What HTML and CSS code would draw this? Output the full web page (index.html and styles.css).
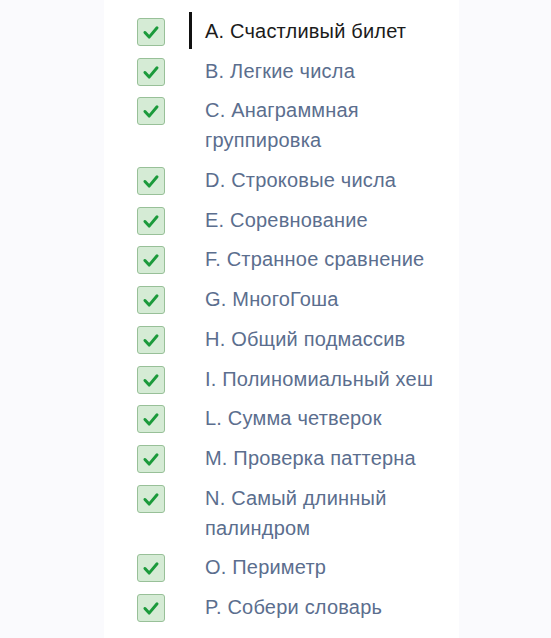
FILE: index.html
```html
<!DOCTYPE html>
<html lang="ru">
<head>
<meta charset="utf-8">
<link rel="stylesheet" href="styles.css">
</head>
<body>
<div class="page">
  <ul class="list">
    <li class="row current">
      <span class="box"><svg viewBox="0 0 28 28"><path d="M7.5 14.5l4.5 5 8.5-10"/></svg></span>
      <span class="label">A. Счастливый билет</span>
      <span class="caret"></span>
    </li>
    <li class="row"><span class="box"><svg viewBox="0 0 28 28"><path d="M7.5 14.5l4.5 5 8.5-10"/></svg></span><span class="label">B. Легкие числа</span></li>
    <li class="row"><span class="box"><svg viewBox="0 0 28 28"><path d="M7.5 14.5l4.5 5 8.5-10"/></svg></span><span class="label">C. Анаграммная группировка</span></li>
    <li class="row"><span class="box"><svg viewBox="0 0 28 28"><path d="M7.5 14.5l4.5 5 8.5-10"/></svg></span><span class="label">D. Строковые числа</span></li>
    <li class="row"><span class="box"><svg viewBox="0 0 28 28"><path d="M7.5 14.5l4.5 5 8.5-10"/></svg></span><span class="label">E. Соревнование</span></li>
    <li class="row"><span class="box"><svg viewBox="0 0 28 28"><path d="M7.5 14.5l4.5 5 8.5-10"/></svg></span><span class="label">F. Странное сравнение</span></li>
    <li class="row"><span class="box"><svg viewBox="0 0 28 28"><path d="M7.5 14.5l4.5 5 8.5-10"/></svg></span><span class="label">G. МногоГоша</span></li>
    <li class="row"><span class="box"><svg viewBox="0 0 28 28"><path d="M7.5 14.5l4.5 5 8.5-10"/></svg></span><span class="label">H. Общий подмассив</span></li>
    <li class="row"><span class="box"><svg viewBox="0 0 28 28"><path d="M7.5 14.5l4.5 5 8.5-10"/></svg></span><span class="label">I. Полиномиальный хеш</span></li>
    <li class="row"><span class="box"><svg viewBox="0 0 28 28"><path d="M7.5 14.5l4.5 5 8.5-10"/></svg></span><span class="label">L. Сумма четверок</span></li>
    <li class="row"><span class="box"><svg viewBox="0 0 28 28"><path d="M7.5 14.5l4.5 5 8.5-10"/></svg></span><span class="label">M. Проверка паттерна</span></li>
    <li class="row"><span class="box"><svg viewBox="0 0 28 28"><path d="M7.5 14.5l4.5 5 8.5-10"/></svg></span><span class="label">N. Самый длинный палиндром</span></li>
    <li class="row"><span class="box"><svg viewBox="0 0 28 28"><path d="M7.5 14.5l4.5 5 8.5-10"/></svg></span><span class="label">O. Периметр</span></li>
    <li class="row"><span class="box"><svg viewBox="0 0 28 28"><path d="M7.5 14.5l4.5 5 8.5-10"/></svg></span><span class="label">P. Собери словарь</span></li>
  </ul>
</div>
</body>
</html>
```

FILE: styles.css
```css
html, body {
  margin: 0;
  padding: 0;
  background: #fafafd;
  height: 100%;
}
.page {
  margin-left: 104px;
  width: 355px;
  min-height: 100%;
  background: #ffffff;
  font-family: "Liberation Sans", Arial, sans-serif;
}
.list {
  list-style: none;
  margin: 0;
  padding: 16px 0 0 0;
}
.row {
  position: relative;
  display: flex;
  align-items: flex-start;
  margin-bottom: 9.7px;
}
.box {
  flex: none;
  box-sizing: border-box;
  width: 28px;
  height: 28px;
  margin: 2px 0 0 33px;
  border: 1.5px solid #98c098;
  border-radius: 3px;
  background: #d5ebd5;
  display: flex;
  align-items: center;
  justify-content: center;
}
.box svg {
  width: 26px;
  height: 26px;
}
.box path {
  fill: none;
  stroke: #1b9a3b;
  stroke-width: 3.2;
  stroke-linecap: round;
  stroke-linejoin: round;
}
.label {
  margin-left: 40px;
  width: 245px;
  font-size: 20px;
  letter-spacing: 0.2px;
  line-height: 30px;
  color: #5b6e8e;
}
.current .label {
  color: #1b1b1b;
}
.caret {
  position: absolute;
  left: 85px;
  top: -4px;
  width: 3px;
  height: 37px;
  background: #111;
}
```
